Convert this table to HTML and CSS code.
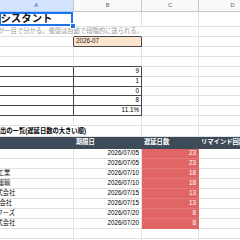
FILE: index.html
```html
<!DOCTYPE html>
<html lang="ja">
<head>
<meta charset="utf-8">
<title>アシスタント</title>
<link rel="stylesheet" href="styles.css">
</head>
<body>
<div class="sheet">
  <div class="c h sel">A</div><div class="c h">B</div><div class="c h">C</div><div class="c h">D</div>

  <div class="c a1"><span class="title">アシスタント</span><span class="handle"></span></div><div class="c"></div><div class="c"></div><div class="c"></div>

  <div class="c nb dk-b0"><span class="sub">が一目で分かる。催促は自動で段階的に送られる。</span></div><div class="c nb dk-b"></div><div class="c"></div><div class="c"></div>

  <div class="c dk-r"></div><div class="c month dk-r dk-b">2026-07</div><div class="c"></div><div class="c"></div>

  <div class="c"></div><div class="c"></div><div class="c"></div><div class="c"></div>

  <div class="c dk-b"></div><div class="c dk-b"></div><div class="c"></div><div class="c"></div>

  <div class="c dk-r dk-b"></div><div class="c r dk-r dk-b">9</div><div class="c"></div><div class="c"></div>
  <div class="c dk-r dk-b"></div><div class="c r dk-r dk-b">1</div><div class="c"></div><div class="c"></div>
  <div class="c dk-r dk-b"></div><div class="c r dk-r dk-b">0</div><div class="c"></div><div class="c"></div>
  <div class="c dk-r dk-b"></div><div class="c r dk-r dk-b">8</div><div class="c"></div><div class="c"></div>
  <div class="c dk-r dk-b"></div><div class="c r dk-r dk-b">11.1%</div><div class="c"></div><div class="c"></div>

  <div class="c"></div><div class="c"></div><div class="c"></div><div class="c"></div>

  <div class="c nb"><span class="sect">出の一覧(遅延日数の大きい順)</span></div><div class="c"></div><div class="c"></div><div class="c"></div>

  <div class="c th"></div><div class="c th">期限日</div><div class="c th">遅延日数</div><div class="c th">リマインド回数</div>

  <div class="c"></div><div class="c r">2026/07/05</div><div class="c r red">23</div><div class="c"></div>
  <div class="c"></div><div class="c r">2026/07/05</div><div class="c r red">23</div><div class="c"></div>
  <div class="c"><span class="nm n4">工業</span></div><div class="c r">2026/07/10</div><div class="c r red">18</div><div class="c"></div>
  <div class="c"><span class="nm n4">運輸</span></div><div class="c r">2026/07/10</div><div class="c r red">18</div><div class="c"></div>
  <div class="c"><span class="nm n6">式会社</span></div><div class="c r">2026/07/15</div><div class="c r red">13</div><div class="c"></div>
  <div class="c"><span class="nm n3">会社</span></div><div class="c r">2026/07/15</div><div class="c r red">13</div><div class="c"></div>
  <div class="c"><span class="nm n6">フーズ</span></div><div class="c r">2026/07/20</div><div class="c r red">8</div><div class="c"></div>
  <div class="c"><span class="nm n6">式会社</span></div><div class="c r">2026/07/20</div><div class="c r red last">8</div><div class="c"></div>

  <div class="c"></div><div class="c"></div><div class="c"></div><div class="c"></div>
  <div class="c"></div><div class="c"></div><div class="c"></div><div class="c"></div>
</div>
</body>
</html>
```

FILE: styles.css
```css
html, body {
  margin: 0;
  padding: 0;
  background: #ffffff;
  width: 240px;
  height: 240px;
  overflow: hidden;
}

.sheet {
  display: grid;
  grid-template-columns: 75px 68px 57px 68px;
  grid-template-rows: 12px 15px 10px 10px 10px 10px 10px 10px 9px 10px 10px 10px 11px 12px repeat(8, 10px) 10px 10px 10px;
  margin-left: -1px;
  font-family: "Liberation Sans", "Noto Sans CJK JP", sans-serif;
  font-size: 6.3px;
  color: #000;
}

.c {
  box-sizing: border-box;
  border-right: 1px solid #e2e2e2;
  border-bottom: 1px solid #e2e2e2;
  display: flex;
  align-items: center;
  padding: 0 2px;
  white-space: nowrap;
  min-width: 0;
  position: relative;
  line-height: 1;
}

.r { justify-content: flex-end; }

.h {
  background: #f8f9fa;
  justify-content: center;
  color: #5f6368;
  font-size: 5.6px;
  border-right-color: #c7c7c7;
  border-bottom-color: #c7c7c7;
}

.h.sel {
  background: #d3e3fd;
  color: #0b57d0;
  border-bottom-color: #a8c7fa;
}

.a1 {
  box-shadow: inset 0 0 0 2px #1a73e8;
  border-right-color: transparent;
  border-bottom-color: transparent;
}

.handle {
  position: absolute;
  right: -3px;
  bottom: -3px;
  width: 4px;
  height: 4px;
  background: #1a73e8;
  border: 1px solid #fff;
  z-index: 2;
}

.title {
  font-size: 10.4px;
  font-weight: bold;
  margin-left: -10.5px;
  color: #111;
}

.sub {
  color: #9a9a9a;
  margin-left: -3px;
}

.nb { border-right-color: transparent; }

.dk-b { border-bottom-color: #474747; }
.dk-r { border-right-color: #474747; }

.month {
  background: #fce5cd;
  color: #222;
}

.sect {
  font-weight: bold;
  margin-left: -1px;
}

.th {
  background: #3d4a58;
  color: #fff;
  font-weight: bold;
  border-right-color: #3d4a58;
  border-bottom-color: #3d4a58;
}

.red {
  background: #e06666;
  color: #fff;
  border-right-color: #e06666;
  border-bottom-color: #e57979;
}
.red.last { border-bottom-color: #e06666; }

.nm { color: #111; }
.n4 { margin-left: -3.3px; }
.n3 { margin-left: -1.6px; }
.n6 { margin-left: -4.6px; }
```
